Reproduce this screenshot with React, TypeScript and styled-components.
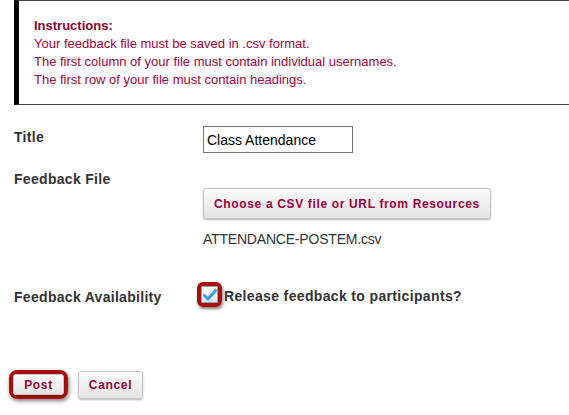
import React from "react";
import styled, { createGlobalStyle } from "styled-components";

const Global = createGlobalStyle`
  html, body { margin: 0; padding: 0; background: #fff; }
  body { font-family: "Liberation Sans", Arial, sans-serif; overflow: hidden; }
`;

const Page = styled.div`
  width: 569px;
  height: 415px;
  overflow: hidden;
`;

const Instructions = styled.div`
  margin-left: 14px;
  margin-right: -20px;
  border-left: 5px solid #000;
  border-top: 1px solid #444;
  border-bottom: 1px solid #444;
  padding: 16px 15px 15px;
  color: #a0053e;
  font-size: 13px;
  line-height: 18px;
`;

const InstrHeading = styled.div`
  font-weight: bold;
  color: #8c0030;
`;

const Form = styled.div`
  margin: 21px 0 0 14px;
  display: grid;
  grid-template-columns: 189px 1fr;
  align-items: start;
`;

const Label = styled.div<{ $top: number }>`
  margin-top: ${(p) => p.$top}px;
  font-size: 14px;
  line-height: 18px;
  font-weight: bold;
  color: #333;
  letter-spacing: 0.3px;
`;

const Field = styled.div<{ $top: number }>`
  margin-top: ${(p) => p.$top}px;
  display: flex;
  flex-direction: column;
  align-items: flex-start;
`;

const TextInput = styled.input`
  box-sizing: border-box;
  width: 150px;
  height: 27px;
  border: 1px solid #767676;
  padding: 0 3px 0 3px;
  font-family: "Liberation Sans", Arial, sans-serif;
  font-size: 14px;
  color: #000;
  outline: none;
`;

const Btn = styled.button<{ $w?: number; $h?: number }>`
  box-sizing: border-box;
  height: ${(p) => p.$h ?? 31}px;
  ${(p) => (p.$w ? `width: ${p.$w}px; padding: 0;` : "padding: 0 10px;")}
  background: linear-gradient(#fbfbfb, #e4e4e4);
  border: 1px solid #c6c6c6;
  border-radius: 3px;
  box-shadow: 0 1px 2px rgba(0, 0, 0, 0.3);
  color: #99003d;
  font-family: "Liberation Sans", Arial, sans-serif;
  font-weight: bold;
  font-size: 12px;
  letter-spacing: 0.65px;
  cursor: pointer;
`;

const FileName = styled.div`
  margin-top: 11px;
  font-size: 14px;
  line-height: 18px;
  color: #333;
  letter-spacing: -0.2px;
`;

const CheckRow = styled.label`
  display: flex;
  align-items: center;
  margin-left: -6px;
`;

const Ring = styled.span`
  display: inline-flex;
  align-items: center;
  justify-content: center;
  border: 4px solid #a80f0f;
  border-radius: 6px;
  box-shadow: 1px 2px 3px rgba(0, 0, 0, 0.5);
`;

const CheckBox = styled.span`
  box-sizing: border-box;
  width: 17px;
  height: 17px;
  margin: 0;
  border: 1px solid #8fa3b5;
  border-radius: 2px;
  background: linear-gradient(#ffffff, #d7e7f5);
  display: flex;
  align-items: center;
  justify-content: center;
`;

const CheckText = styled.span`
  margin: 3px 0 0 2px;
  font-size: 14px;
  font-weight: bold;
  color: #333;
  line-height: 18px;
  letter-spacing: 0.35px;
`;

const Actions = styled.div`
  margin: 63px 0 0 9px;
  display: flex;
  align-items: center;
  gap: 10px;
`;

const PostRing = styled.span`
  display: inline-flex;
  border: 4px solid #a80f0f;
  border-radius: 8px;
  box-shadow: 1px 2px 4px rgba(0, 0, 0, 0.5);
`;

export default function App() {
  return (
    <Page>
      <Global />
      <Instructions>
        <InstrHeading>Instructions:</InstrHeading>
        <div>Your feedback file must be saved in .csv format.</div>
        <div>The first column of your file must contain individual usernames.</div>
        <div>The first row of your file must contain headings.</div>
      </Instructions>
      <Form>
        <Label $top={2}>Title</Label>
        <Field $top={0}>
          <TextInput defaultValue="Class Attendance" />
        </Field>
        <Label $top={17}>Feedback File</Label>
        <Field $top={35}>
          <Btn>Choose a CSV file or URL from Resources</Btn>
          <FileName>ATTENDANCE-POSTEM.csv</FileName>
        </Field>
        <Label $top={40}>Feedback Availability</Label>
        <Field $top={34}>
          <CheckRow>
            <Ring>
              <CheckBox>
                <svg width="14" height="12" viewBox="0 0 14 12">
                  <path d="M1.5 6.5 L5 10 L12.5 1.5" fill="none" stroke="#3f9be0" strokeWidth="3" strokeLinecap="round" strokeLinejoin="round" />
                </svg>
              </CheckBox>
            </Ring>
            <CheckText>Release feedback to participants?</CheckText>
          </CheckRow>
        </Field>
      </Form>
      <Actions>
        <PostRing>
          <Btn $w={51} $h={21}>Post</Btn>
        </PostRing>
        <Btn $w={65} $h={28}>Cancel</Btn>
      </Actions>
    </Page>
  );
}
